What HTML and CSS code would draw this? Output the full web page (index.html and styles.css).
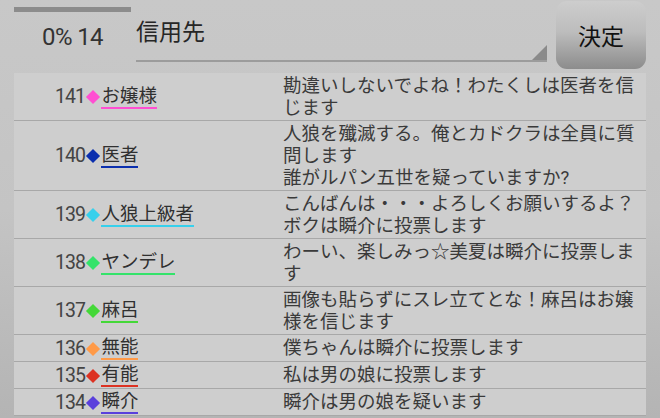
FILE: index.html
```html
<!DOCTYPE html>
<html lang="ja">
<head>
  <meta charset="UTF-8">
  <meta name="viewport" content="width=device-width, initial-scale=1.0">
  <title>投票</title>
  <link rel="stylesheet" href="styles.css">
</head>
<body>
  <div class="header">
    <div class="status">
      <div class="progress"></div>
      <div class="status-text">0% 14</div>
    </div>
    <div class="spinner">信用先</div>
    <button class="decide">決定</button>
  </div>
  <div class="log">
    <div class="row">
      <div class="who"><span class="num">141</span><span class="mark c-pink"></span><span class="name c-pink">お嬢様</span></div>
      <div class="msg">勘違いしないでよね！わたくしは医者を信じます</div>
    </div>
    <div class="row">
      <div class="who"><span class="num">140</span><span class="mark c-blue"></span><span class="name c-blue">医者</span></div>
      <div class="msg">人狼を殲滅する。俺とカドクラは全員に質問します<br>誰がルパン五世を疑っていますか?</div>
    </div>
    <div class="row">
      <div class="who"><span class="num">139</span><span class="mark c-cyan"></span><span class="name c-cyan">人狼上級者</span></div>
      <div class="msg">こんばんは・・・よろしくお願いするよ？<br>ボクは瞬介に投票します</div>
    </div>
    <div class="row">
      <div class="who"><span class="num">138</span><span class="mark c-green"></span><span class="name c-green">ヤンデレ</span></div>
      <div class="msg">わーい、楽しみっ☆美夏は瞬介に投票します</div>
    </div>
    <div class="row">
      <div class="who"><span class="num">137</span><span class="mark c-lime"></span><span class="name c-lime">麻呂</span></div>
      <div class="msg">画像も貼らずにスレ立てとな！麻呂はお嬢様を信じます</div>
    </div>
    <div class="row">
      <div class="who"><span class="num">136</span><span class="mark c-orange"></span><span class="name c-orange">無能</span></div>
      <div class="msg">僕ちゃんは瞬介に投票します</div>
    </div>
    <div class="row">
      <div class="who"><span class="num">135</span><span class="mark c-red"></span><span class="name c-red">有能</span></div>
      <div class="msg">私は男の娘に投票します</div>
    </div>
    <div class="row">
      <div class="who"><span class="num">134</span><span class="mark c-purple"></span><span class="name c-purple">瞬介</span></div>
      <div class="msg">瞬介は男の娘を疑います</div>
    </div>
  </div>
</body>
</html>
```

FILE: styles.css
```css
html, body {
  margin: 0;
  padding: 0;
  height: 100%;
  overflow: hidden;
}
body {
  background: linear-gradient(to bottom, #c8c8c8 0%, #c4c4c4 50%, #b4b4b4 100%);
  font-family: Roboto, "Noto Sans CJK JP", sans-serif;
  color: #3a3a3a;
}
.header {
  display: flex;
  height: 73px;
}
.status {
  width: 117px;
  margin-left: 14px;
  display: flex;
  flex-direction: column;
  align-items: center;
}
.progress {
  width: 100%;
  height: 5px;
  margin-top: 7px;
  background-color: #8c8c8c;
}
.status-text {
  margin-top: 10px;
  font-size: 24px;
  letter-spacing: -0.6px;
  line-height: 30px;
  color: #333;
}
.spinner {
  flex: 1;
  margin-left: 5px;
  height: 62px;
  border-bottom: 2px solid #9c9c9c;
  font-size: 23px;
  line-height: 24px;
  padding-top: 21px;
  box-sizing: border-box;
  color: #262626;
  position: relative;
}
.spinner::after {
  content: "";
  position: absolute;
  right: 0;
  bottom: 0;
  border-style: solid;
  border-width: 0 0 15px 15px;
  border-color: transparent transparent #8a8a8a transparent;
}
.decide {
  width: 90px;
  height: 68px;
  margin: 1px 14px 0 9px;
  border: none;
  border-radius: 11px;
  background: linear-gradient(to bottom, #cdcdcd 0%, #bdbdbd 45%, #8c8c8c 100%);
  font-family: Roboto, "Noto Sans CJK JP", sans-serif;
  font-size: 23px;
  color: #111;
  padding: 0;
}
.log {
  margin: 0 14px;
  background-color: #cecece;
}
.row {
  display: grid;
  grid-template-columns: 269px 1fr;
  border-bottom: 1px solid #a8a8a8;
  padding: 2px 0 1px;
  font-size: 18.5px;
  line-height: 22px;
}
.who {
  display: flex;
  align-items: center;
  padding-left: 41px;
}
.num {
  font-size: 19.5px;
  letter-spacing: -1px;
  color: #444;
}
.mark {
  display: inline-block;
  width: 10px;
  height: 10px;
  margin: 0 3px 0 3.5px;
  transform: rotate(45deg);
  background-color: currentColor;
}
.name {
  color: #303030;
  border-bottom: 2px solid currentColor;
  line-height: 21px;
}
.msg {
  padding-right: 4px;
}
.c-pink { color: #ff4fd2; border-color: #ff4fd2; }
.c-blue { color: #0b2fae; border-color: #0b2fae; }
.c-cyan { color: #36d0ec; border-color: #36d0ec; }
.c-green { color: #34e36a; border-color: #34e36a; }
.c-lime { color: #44d838; border-color: #44d838; }
.c-orange { color: #ff9a48; border-color: #ff9a48; }
.c-red { color: #dc3222; border-color: #dc3222; }
.c-purple { color: #5a40dc; border-color: #5a40dc; }
.name.c-pink, .name.c-blue, .name.c-cyan, .name.c-green,
.name.c-lime, .name.c-orange, .name.c-red, .name.c-purple { color: #303030; }
```
